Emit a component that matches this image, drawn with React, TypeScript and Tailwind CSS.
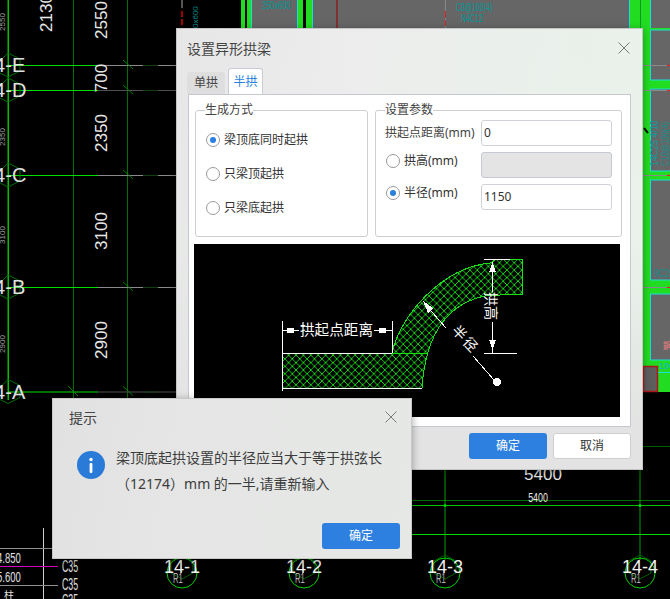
import React from "react";

const CAD_FONT = "'Liberation Sans', 'Noto Sans CJK SC', sans-serif";

function Background() {
  const rows = [65, 90, 175, 287, 391.5];
  const dims: [string, number][] = [["2550", 20], ["700", 78], ["2350", 133], ["3100", 231], ["2900", 340]];
  const smallDims: [string, number][] = [["2550", 22], ["2350", 137], ["3100", 235], ["2900", 344]];
  const columns: [string, number][] = [["14-1", 182], ["14-2", 304], ["14-3", 445], ["14-4", 640]];
  const topSegs: [number, number, string][] = [
    [241, 4, "#22dc22"], [247, 4, "#22dc22"], [251, 1, "#18e0d8"], [252, 45, "#666666"], [297, 1, "#18e0d8"],
    [298, 5, "#22dc22"], [306, 6, "#22dc22"], [312, 1, "#18e0d8"], [313, 316, "#666666"],
    [629, 1, "#18e0d8"], [630, 10, "#22dc22"], [640, 1, "#0a9a2a"], [641, 9, "#22dc22"], [650, 1, "#18e0d8"], [651, 19, "#666666"],
  ];
  return (
    <svg className="absolute left-0 top-0" width="670" height="599" viewBox="0 0 670 599" style={{ fontFamily: CAD_FONT }}>
      <rect width="670" height="599" fill="#000" />
      {topSegs.map(([x, w, c], i) => (
        <rect key={i} x={x} y={0} width={w} height={30} fill={c} />
      ))}
      <rect x="336" y="0" width="2" height="30" fill="#803030" />
      <rect x="445" y="0" width="1" height="30" fill="#888" />
      <rect x="445" y="11" width="1" height="7" fill="#e02020" />
      <rect x="445" y="20" width="1" height="6" fill="#e02020" />
      <rect x="181" y="0" width="2" height="8" fill="#555" />
      <rect x="181" y="11" width="2" height="6" fill="#a00000" />
      <rect x="181" y="19" width="2" height="6" fill="#a00000" />
      <text transform="translate(262,9) scale(0.75,1)" fontSize="10" fill="#009898">250x600</text>
      <text transform="translate(456,11) scale(0.7,1)" fontSize="10" fill="#009898">C8@100(4)</text>
      <text transform="translate(461,22) scale(0.7,1)" fontSize="10" fill="#009898">N4C12</text>
      <text transform="translate(198,28) rotate(-90)" fontSize="8" fill="#008888">0x600</text>

      {/* right column */}
      <rect x="643" y="28" width="27" height="364" fill="#22dc22" />
      {[[30, 50], [89, 82], [180, 100], [294, 66]].map(([y, h], i) => (
        <rect key={i} x="650.5" y={y} width="20" height={h} fill="#666666" stroke="#18e0d8" strokeWidth="1" />
      ))}
      <rect x="643.5" y="366.5" width="14" height="25" fill="#5e5e5e" stroke="#b01818" strokeWidth="1.5" />
      <rect x="658" y="372" width="12" height="1" fill="#18e0d8" />
      <text transform="translate(658,166) rotate(-90) scale(0.8,1)" fontSize="11" fill="#109c9c">14C25 4/10</text>
      <text transform="translate(669,166) rotate(-90) scale(0.7,1)" fontSize="11" fill="#109090">C10@100(4)</text>
      <text transform="translate(654,277) scale(0.75,1)" fontSize="11" fill="#109090">9C25</text>
      <text x="663" y="349" fontSize="9" fill="#f08080">鋼</text>
      <text x="659" y="369" fontSize="9" fill="#10b0d0">10C</text>
      {[65, 90, 175, 287].map((y) => (
        <g key={y}>
          <rect x="643" y={y} width="27" height="1" fill="#8a8a8a" />
          <rect x="667" y={y} width="3" height="1" fill="#e02020" />
        </g>
      ))}
      <path d="M644 128L648 133" stroke="#000" strokeWidth="2" />

      {/* left grid */}
      <rect x="7.5" y="0" width="1.5" height="400" fill="#00c000" />
      <rect x="73" y="0" width="1" height="400" fill="#007000" />
      <rect x="127" y="0" width="1" height="400" fill="#007000" />
      {rows.map((y, i) => (
        <g key={y}>
          <rect x="8" y={y} width="90" height="1" fill="#00e000" />
          <rect x="98" y={y} width="78" height="1" fill={i === 1 || i === 4 ? "#505050" : "#8a8a8a"} />
          <rect x="143" y={y} width="15" height="1" fill="#104010" />
          <path d={`M123 ${y - 5}L133 ${y + 4}`} stroke="#008000" />
          <path d={`M-4 ${y}L8 ${y - 12}L20 ${y - 6}L20 ${y + 6}L8 ${y + 12}L-4 ${y + 6}`} fill="none" stroke="#007000" />
        </g>
      ))}
      <path d="M68 386L78 396" stroke="#008000" />
      {dims.map(([t, y]) => (
        <text key={t} transform={`translate(107,${y}) rotate(-90)`} textAnchor="middle" fontSize="17" fill="#e8e8e8">{t}</text>
      ))}
      <text transform="translate(52,13) rotate(-90)" textAnchor="middle" fontSize="17" fill="#e8e8e8">2130</text>
      {smallDims.map(([t, y]) => (
        <text key={t} transform={`translate(5,${y}) rotate(-90)`} textAnchor="middle" fontSize="8" fill="#a0a0a0">{t}</text>
      ))}
      {[["14-E", 72], ["14-D", 97], ["14-C", 182], ["14-B", 294], ["14-A", 399]].map(([t, y]) => (
        <text key={t} x="-17" y={y} fontSize="20" fill="#e0e0e0">{t}</text>
      ))}

      {/* bottom left */}
      <rect x="43" y="528" width="1" height="71" fill="#d0d0d0" />
      <rect x="0" y="548" width="52" height="1" fill="#909090" />
      <rect x="0" y="566" width="58" height="1" fill="#d000c0" />
      <rect x="0" y="585" width="58" height="1" fill="#909090" />
      <g fill="#e0e0e0">
        <text transform="translate(-3,563) scale(0.68,1)" fontSize="14">4.850</text>
        <text transform="translate(-3,582) scale(0.68,1)" fontSize="14">5.600</text>
        <text transform="translate(62,572) scale(0.55,1)" fontSize="16">C35</text>
        <text transform="translate(62,590) scale(0.55,1)" fontSize="16">C35</text>
        <text transform="translate(62,606) scale(0.55,1)" fontSize="16">C35</text>
        <text x="4" y="599" fontSize="10">柱</text>
      </g>

      {/* bottom right grid */}
      <rect x="412" y="500" width="258" height="1" fill="#007000" />
      <rect x="412" y="505" width="258" height="1" fill="#00c000" />
      <rect x="412" y="534" width="258" height="1" fill="#00e000" />
      <rect x="643" y="446" width="27" height="1" fill="#006000" />
      <rect x="444.5" y="470" width="1" height="90" fill="#00a000" />
      <rect x="639.5" y="392" width="1" height="168" fill="#00a000" />
      <circle cx="445" cy="505.5" r="1.5" fill="#00d000" />
      <circle cx="640" cy="505.5" r="1.5" fill="#00d000" />
      <text x="543" y="480" textAnchor="middle" fontSize="17" fill="#e8e8e8">5400</text>
      <text transform="translate(538,502) scale(0.68,1)" textAnchor="middle" fontSize="13" fill="#e8e8e8">5400</text>

      {columns.map(([t, x]) => (
        <g key={t}>
          <path d={`M${x - 11} 561L${x} 555L${x + 11} 561L${x + 11} 573L${x} 579L${x - 11} 573Z`} fill="none" stroke="#006000" />
          <circle cx={x} cy="573" r="15" fill="none" stroke="#00d000" />
          <text x={x} y="573" textAnchor="middle" fontSize="18" fill="#f2f2f2">{t}</text>
          <text transform={`translate(${x - 9},583) scale(0.55,1)`} fontSize="14" fill="#b0b0b0">R1</text>
        </g>
      ))}
    </svg>
  );
}

function CloseIcon() {
  return (
    <svg width="12" height="12" viewBox="0 0 12 12" className="shrink-0">
      <path d="M0.5 0.5L11.5 11.5M11.5 0.5L0.5 11.5" stroke="#7a7a7a" strokeWidth="1" fill="none" />
    </svg>
  );
}

function Radio({ checked }: { checked?: boolean }) {
  return (
    <span className="flex h-[14px] w-[14px] shrink-0 items-center justify-center rounded-full border border-[#9a9a9a] bg-white">
      {checked && <span className="h-[6px] w-[6px] rounded-full bg-[#2a7fe0]" />}
    </span>
  );
}

function Diagram() {
  const outline =
    "M392 353C400 316 441 268 490 263L497 259H522V294H502L500 295L491 295C440 302 425 345 422 388H282V353Z";
  return (
    <svg width="426" height="173" viewBox="194 244 426 173" className="block bg-black" shapeRendering="crispEdges">
      <defs>
        <pattern id="hatch" patternUnits="userSpaceOnUse" width="7.4" height="7.4">
          <path d="M0 0L7.4 7.4M7.4 0L0 7.4" stroke="#16d916" strokeWidth="1" fill="none" />
        </pattern>
      </defs>
      <path d={outline} fill="url(#hatch)" stroke="#16e016" strokeWidth="1" />
      <path d="M392 353H428" stroke="#16e016" />
      <g stroke="#fff" strokeWidth="1" fill="none">
        <path d="M282.5 321V391M392.5 321V353M282 353.5H392M282 388.5H422" />
        <path d="M282 330.5H299M374 330.5H392" />
        <path d="M484 259.5H510M484 353.5H517M492.5 262V292M492.5 322V353" />
        <path d="M425 304L446 328M473 356L494 380" />
      </g>
      <g fill="#fff">
        <rect x="287" y="328" width="7" height="5" />
        <rect x="379" y="328" width="7" height="5" />
        <path d="M492.5 262L496 272H489Z" />
        <path d="M492.5 350L489 340H496Z" />
        <path d="M423 301L433 308L428 313Z" />
        <circle cx="497" cy="382" r="4" />
      </g>
      <g fill="#fff" fontFamily="'Noto Sans CJK SC', sans-serif" fontWeight="400" shapeRendering="auto">
        <text x="300" y="335" fontSize="14.6">拱起点距离</text>
        <text transform="translate(486,292) rotate(90)" fontSize="14">拱高</text>
        <text transform="translate(451,331) rotate(47)" fontSize="14" letterSpacing="2">半径</text>
      </g>
    </svg>
  );
}

function ParamInput({ value, disabled }: { value?: string; disabled?: boolean }) {
  return (
    <div
      className={`h-[26px] w-[131px] shrink-0 rounded-[3px] border pl-[2px] text-[12px] leading-[24px] text-[#333] ${
        disabled ? "border-[#c5cad3] bg-[#e4e4e4]" : "border-[#cfd2d8] bg-white"
      }`}
    >
      {value}
    </div>
  );
}

function App() {
  return (
    <div className="relative h-[599px] w-[670px] overflow-hidden bg-black font-['Noto_Sans','Noto_Sans_CJK_SC',sans-serif] text-[#333]">
      <Background />

      {/* main dialog */}
      <div className="absolute left-[176px] top-[28px] flex h-[442px] w-[467px] flex-col border border-[#c4c4c4] bg-[linear-gradient(180deg,rgba(236,238,236,0.25)_0%,rgba(236,240,236,0.4)_50%,rgba(226,227,226,1)_90%),linear-gradient(90deg,#e4e4e4_0%,#ececec_40%,#e8f3ea_100%)] shadow-[0_2px_8px_rgba(0,0,0,0.35)]">
        <div className="flex h-[38px] shrink-0 items-center justify-between pl-[10px] pr-[12px]">
          <span className="text-[14px] text-[#444]">设置异形拱梁</span>
          <CloseIcon />
        </div>
        <div className="flex h-[27px] shrink-0 items-end gap-[3px] pl-[10px]">
          <div className="flex h-[22px] w-[38px] items-center justify-center rounded-t-[3px] bg-[#dedede] text-[12px] text-[#444]">
            单拱
          </div>
          <div className="-mb-px flex h-[27px] w-[35px] items-center justify-center rounded-t-[3px] border border-b-0 border-[#c8ccd4] bg-white text-[12px] text-[#2a7fe0]">
            半拱
          </div>
        </div>
        <div className="ml-[11px] h-[333px] w-[443px] shrink-0 border border-[#c5c8cf] bg-white pl-[5px] pt-[7px]">
          <div className="ml-px flex gap-[7px]">
            <fieldset className="h-[135px] w-[173px] rounded-[3px] border border-[#cfcfcf]">
              <legend className="ml-[9px] h-[16px] text-[12px] leading-[16px] text-[#444]">生成方式</legend>
              <div className="pl-[10px] pt-[5px]">
                {["梁顶底同时起拱", "只梁顶起拱", "只梁底起拱"].map((t, i) => (
                  <div key={t} className="flex h-[34px] items-center gap-[4px] text-[12px] text-[#333]">
                    <Radio checked={i === 0} />
                    <span>{t}</span>
                  </div>
                ))}
              </div>
            </fieldset>
            <fieldset className="h-[135px] w-[247px] rounded-[3px] border border-[#cfcfcf]">
              <legend className="ml-[9px] h-[16px] text-[12px] leading-[16px] text-[#444]">设置参数</legend>
              <div className="flex flex-col gap-[6px] pt-[2px]">
                <div className="flex h-[26px] items-center">
                  <span className="w-[105px] pl-[9px] text-[12px] text-[#444]">拱起点距离(mm)</span>
                  <ParamInput value="0" />
                </div>
                <div className="flex h-[26px] items-center">
                  <div className="mb-[9px] flex w-[105px] items-center gap-[4px] pl-[10px] text-[12px] text-[#333]">
                    <Radio />
                    <span>拱高(mm)</span>
                  </div>
                  <ParamInput disabled />
                </div>
                <div className="flex h-[26px] items-center">
                  <div className="mb-[9px] flex w-[105px] items-center gap-[4px] pl-[10px] text-[12px] text-[#333]">
                    <Radio checked />
                    <span>半径(mm)</span>
                  </div>
                  <ParamInput value="1150" />
                </div>
              </div>
            </fieldset>
          </div>
          <div className="mt-[7px]">
            <Diagram />
          </div>
        </div>
        <div className="flex shrink-0 justify-end gap-[6px] pr-[11px] pt-[6px]">
          <div className="flex h-[26px] w-[78px] items-center justify-center rounded-[3px] bg-[#2d80e0] text-[12px] text-white">
            确定
          </div>
          <div className="flex h-[26px] w-[78px] items-center justify-center rounded-[3px] border border-[#cfcfcf] bg-white text-[12px] text-[#333]">
            取消
          </div>
        </div>
      </div>

      {/* alert dialog */}
      <div className="absolute left-[52px] top-[398px] flex h-[161px] w-[360px] flex-col border border-[#c8c8c8] bg-[linear-gradient(100deg,#e0e1e0_0%,#e4e5e4_30%,#e6e8e6_100%)] shadow-[0_2px_8px_rgba(0,0,0,0.35)]">
        <div className="flex h-[36px] shrink-0 items-center justify-between pl-[16px] pr-[14px]">
          <span className="text-[14px] text-[#444]">提示</span>
          <CloseIcon />
        </div>
        <div className="flex gap-[11px] pl-[24px] pt-[10px]">
          <svg width="28" height="28" viewBox="0 0 28 28" className="mt-[6px] shrink-0">
            <circle cx="14" cy="14" r="14" fill="#2a7ad8" />
            <circle cx="14" cy="8.5" r="1.7" fill="#fff" />
            <rect x="12.6" y="12" width="2.8" height="10" rx="1" fill="#fff" />
          </svg>
          <div className="text-[14px] leading-[26px] text-[#3c3c3c]">
            <div>梁顶底起拱设置的半径应当大于等于拱弦长</div>
            <div>（12174）mm 的一半,请重新输入</div>
          </div>
        </div>
        <div className="mt-auto flex justify-end pb-[9px] pr-[11px]">
          <div className="flex h-[26px] w-[78px] items-center justify-center rounded-[3px] bg-[#2d80e0] text-[12px] text-white">
            确定
          </div>
        </div>
      </div>
    </div>
  );
}

export default App;
